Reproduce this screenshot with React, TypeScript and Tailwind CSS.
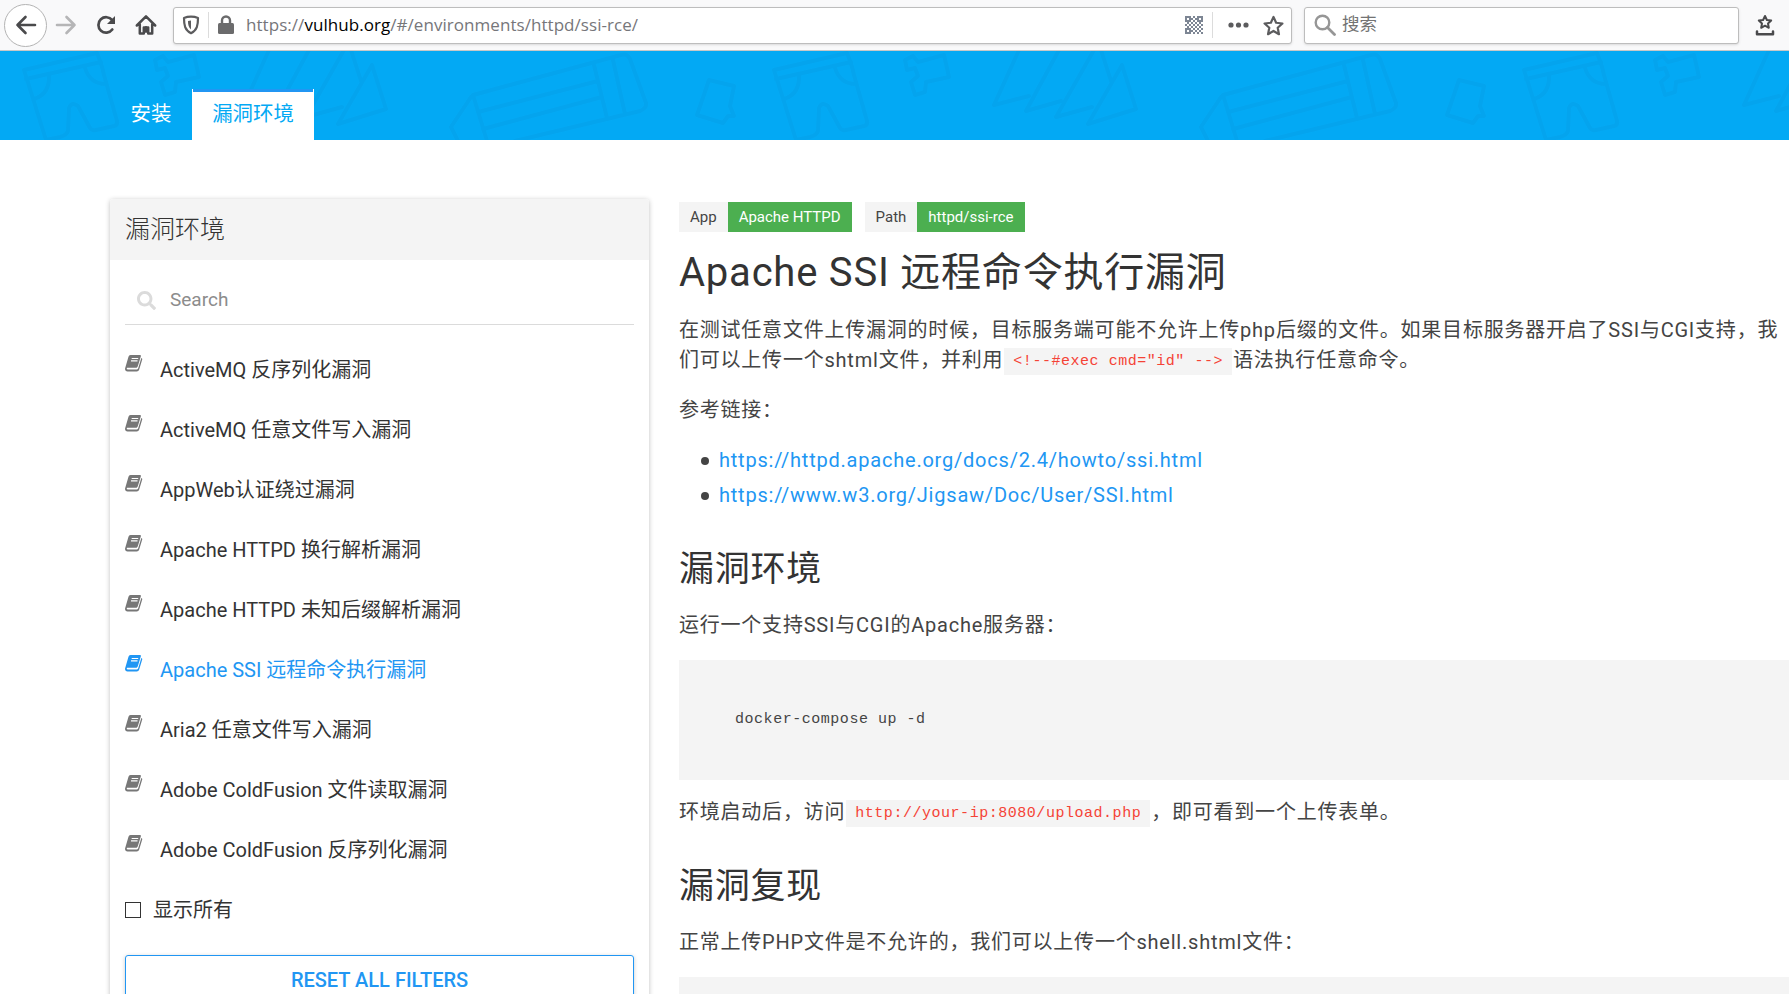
import React from 'react';
import { FaBook, FaSearch } from 'react-icons/fa';

const environments = [
  'ActiveMQ 反序列化漏洞',
  'ActiveMQ 任意文件写入漏洞',
  'AppWeb认证绕过漏洞',
  'Apache HTTPD 换行解析漏洞',
  'Apache HTTPD 未知后缀解析漏洞',
  'Apache SSI 远程命令执行漏洞',
  'Aria2 任意文件写入漏洞',
  'Adobe ColdFusion 文件读取漏洞',
  'Adobe ColdFusion 反序列化漏洞',
];

const activeEnvironment = 'Apache SSI 远程命令执行漏洞';

const links = [
  'https://httpd.apache.org/docs/2.4/howto/ssi.html',
  'https://www.w3.org/Jigsaw/Doc/User/SSI.html',
];

const STAR = 'M10 1.8l2.5 5.6 6 .7-4.5 4.1 1.2 6.1-5.2-3.1-5.2 3.1L6 12.2 1.5 8.1l6-.7z';

const QR_ROWS = [
  '111010111',
  '101101101',
  '111010111',
  '010101010',
  '101010101',
  '010101010',
  '111010101',
  '101101010',
  '111010101',
];

const BrowserToolbar: React.FC = () => (
  <div className="flex h-[51px] items-center border-b border-[#c8c8c8] bg-[#f9f9fa] text-[#4a4a4c]">
    <div className="ml-1 flex h-[43px] w-[43px] shrink-0 items-center justify-center rounded-full border border-[#b4b4b4] bg-white">
      <svg className="h-[22px] w-[22px]" viewBox="0 0 22 22" fill="none" stroke="currentColor" strokeWidth="2.6" strokeLinecap="round" strokeLinejoin="round">
        <path d="M20 11H2.5M10.5 3l-8 8 8 8" />
      </svg>
    </div>
    <svg className="ml-[8px] h-[22px] w-[22px] shrink-0 text-[#b5b5b6]" viewBox="0 0 22 22" fill="none" stroke="currentColor" strokeWidth="2.6" strokeLinecap="round" strokeLinejoin="round">
      <path d="M2 11h17.500M11.500 3l8 8-8 8" />
    </svg>
    <svg className="ml-[18px] h-[22px] w-[22px] shrink-0" viewBox="0 0 22 22" fill="none" stroke="currentColor" strokeWidth="2.700" strokeLinecap="round">
      <path d="M17.300 15.500A7.700 7.700 0 1 1 17.200 6.200" />
      <path d="M20 2v8h-8z" fill="currentColor" stroke="none" />
    </svg>
    <svg className="ml-[18px] h-[22px] w-[22px] shrink-0" viewBox="0 0 22 22" fill="none" stroke="currentColor" strokeWidth="2.500" strokeLinejoin="round" strokeLinecap="round">
      <path d="M1.800 11.500L11 2.300l9.200 9.200M4.800 10.500v9h4v-6h4.400v6h4v-9" />
      <path d="M11 13v5" strokeWidth="2" />
    </svg>

    {/* Address bar */}
    <div className="ml-[16px] flex h-[37px] w-[1119px] shrink-0 items-center rounded-[3px] border border-[#bdbdbd] bg-white shadow-sm">
      <svg className="ml-[8px] h-[20px] w-[18px]" viewBox="0 0 18 20" fill="none" stroke="#5c5c5e" strokeWidth="2.200" strokeLinejoin="round">
        <path d="M9 1.600c2.500 0 5 .5 7 1.400 0 7-.8 12-7 15.200C2.800 15 2 10 2 3c2-.9 4.500-1.400 7-1.400z" />
        <path d="M9 5.500v9C6.500 12.500 6 9.500 6 6z" fill="#5c5c5e" stroke="none" />
      </svg>
      <div className="ml-[8px] h-[26px] w-px bg-[#dcdcdc]" />
      <svg className="ml-[9px] h-[20px] w-[16px]" viewBox="0 0 16 20">
        <path d="M4 9V5.500a4 4 0 0 1 8 0V9" fill="none" stroke="#6b6b6c" strokeWidth="2.400" />
        <rect x="0" y="8" width="16" height="11" rx="1.500" fill="#6b6b6c" />
      </svg>
      <span className="ml-[12px] whitespace-nowrap font-['Open_Sans','Noto_Sans',sans-serif] text-[17px] tracking-[0.05px] text-[#76767a]">
        https://<span className="text-black">vulhub.org</span>/#/environments/httpd/ssi-rce/
      </span>
      <svg className="ml-auto h-[18px] w-[18px]" viewBox="0 0 9 9" fill="#7d8694">
        {QR_ROWS.map((row, y) =>
          row.split('').map((cell, x) =>
            cell === '1' ? <rect key={`${x}-${y}`} x={x} y={y} width="1" height="1" /> : null
          )
        )}
      </svg>
      <div className="ml-[9px] h-[26px] w-px bg-[#dcdcdc]" />
      <svg className="ml-[15px] h-[6px] w-[21px]" viewBox="0 0 21 6" fill="#5c5c5e">
        <circle cx="3" cy="3" r="2.600" />
        <circle cx="10.500" cy="3" r="2.600" />
        <circle cx="18" cy="3" r="2.600" />
      </svg>
      <svg className="ml-[14px] mr-[7px] h-[21px] w-[21px]" viewBox="0 0 20 20" fill="none" stroke="#5c5c5e" strokeWidth="2.100" strokeLinejoin="round">
        <path d={STAR} />
      </svg>
    </div>

    {/* Search bar */}
    <div className="ml-[12px] flex h-[37px] w-[435px] shrink-0 items-center rounded-[3px] border border-[#bdbdbd] bg-white shadow-sm">
      <svg className="ml-[9px] h-[22px] w-[22px]" viewBox="0 0 22 22" fill="none" stroke="#969696" strokeWidth="2.400" strokeLinecap="round">
        <circle cx="8.500" cy="8.500" r="6.800" />
        <path d="M13.500 13.500l7 7" strokeWidth="2.800" />
      </svg>
      <span className="ml-[6px] text-[17.5px] leading-none text-[#737373]">搜索</span>
    </div>
    <svg className="ml-[16px] h-[22px] w-[20px] shrink-0" viewBox="0 0 20 22" fill="none" stroke="currentColor" strokeWidth="2.200" strokeLinecap="round" strokeLinejoin="round">
      <path d="M10 2l1.900 4 4.300.5-3.200 3 .8 4.300-3.800-2.100-3.800 2.100.8-4.300-3.200-3 4.300-.5z" strokeWidth="2" />
      <path d="M2 17.500v2.800h16v-2.800" strokeWidth="2.500" />
    </svg>
  </div>
);

const Doodles: React.FC = () => (
  <svg className="absolute inset-0 h-full w-full" fill="none" stroke="#04a4ee" strokeWidth="4" strokeLinejoin="round" strokeLinecap="round">
    <defs>
      <pattern id="doodles" width="750" height="200" patternUnits="userSpaceOnUse">
        {/* shorts */}
        <path d="M24 19L97 2Q102 14 104 24L117 70Q118 74 114 75L96 79Q92 80 90 77L78 55Q72 50 69 57L68 80Q67 84 60 86L46 89Z" />
        <path d="M26 28L101 11M49 24Q50 43 34 48M85 17Q90 33 106 33" />
        {/* puzzle piece */}
        <path d="M155 9L163 5 168 11 194 4 199 26 176 31 175 41 165 44 161 31 168 25 165 17 157 19Z" />
        {/* triangles */}
        <path d="M269 -1L244 54 279 45M309 -1L276 60 311 50M344 -1L306 66 342 56M351 -1L361 30M372 14L338 73 386 58Z" />
        {/* pencil */}
        <path d="M487 90L473 44 621 4Q627 2 630 8L646 52Q647 57 640 60L515 90M594 14L607 67M613 9L625 63M478 61L598 30M483 78L602 46M471 46L451 76 458 90" />
        <path d="M709 29L734 35 730 55 734 65 728 65 723 72 697 64Z" />
      </pattern>
    </defs>
    <rect width="100%" height="100%" fill="url(#doodles)" stroke="none" />
  </svg>
);

const Sidebar: React.FC = () => (
  <aside className="h-[900px] w-[539px] shrink-0 rounded-t-[3px] bg-white shadow-[0_1px_5px_rgba(0,0,0,0.25)]">
    <div className="flex h-[61px] items-center rounded-t-[3px] bg-[#f4f4f4] px-[15px] text-[25px] font-light text-[#333]">
      漏洞环境
    </div>
    <div className="px-[15px]">
      <div className="mt-[16px] flex h-[49px] items-center border-b border-[#dbdbdb] pl-[12px]">
        <FaSearch className="h-[19px] w-[19px] text-[#dbdbdb]" />
        <span className="ml-[14px] text-[19px] text-[#8c8c8c]">Search</span>
      </div>
      <ul className="mt-[15px]">
        {environments.map((name) => (
          <li
            key={name}
            className={`flex h-[60px] items-center ${name === activeEnvironment ? 'text-[#2196f3]' : 'text-[#333]'}`}
          >
            <BookIcon active={name === activeEnvironment} />
            <span className="ml-[17px] whitespace-nowrap text-[20px]">{name}</span>
          </li>
        ))}
      </ul>
      <div className="flex h-[60px] items-center text-[20px] text-[#333]">
        <span className="h-[16px] w-[16px] border border-[#333]" />
        <span className="ml-[12px]">显示所有</span>
      </div>
      <button className="mt-[15px] h-[50px] w-full rounded-[3px] border border-[#2196f3] text-[20px] font-medium text-[#2196f3] shadow-[0_1px_4px_rgba(0,0,0,0.2)]">
        RESET ALL FILTERS
      </button>
    </div>
  </aside>
);

const BookIcon: React.FC<{ active: boolean }> = ({ active }) => (
  <svg className="mb-[13px] h-[17px] w-[18px]" viewBox="0 0 18 17" fill={active ? '#2196f3' : '#777'}>
    <path d="M5.500 0h9.300c.9 0 1.300.7 1 1.500l-3 9.800c-.3.9-.9 1.500-1.900 1.500H2.300c-.7 0-.9 1.700.4 1.700h8.600c1 0 1.600-.4 1.900-1.300L16.300 3c.9.2 1.100.8.9 1.500l-3 10c-.4 1.300-1.200 2-2.500 2H2.500C.7 16.500-.4 14.800.2 13L3.400 2C3.800.700 4.500 0 5.500 0z" />
    <path d="M6.700 3.500h6.500M6 5.900h6.500" stroke="#fff" strokeWidth="1.200" />
  </svg>
);

const Tag: React.FC<{ label: string; value: string }> = ({ label, value }) => (
  <div className="flex h-[30px] text-[15px] leading-[30px]">
    <span className="bg-[#f4f4f4] px-[11px] text-[#444]">{label}</span>
    <span className="bg-[#4caf50] px-[11px] text-white">{value}</span>
  </div>
);

const Code: React.FC<{ children: React.ReactNode }> = ({ children }) => (
  <code className="mx-[1px] inline-block h-[27px] bg-[#f4f4f4] px-[9px] align-top font-['Liberation_Mono',monospace] text-[15px] leading-[27px] tracking-[0.53px] text-[#f44336] mt-[3px]">
    {children}
  </code>
);

const Article: React.FC = () => (
  <article className="ml-[30px] w-[1130px] shrink-0 whitespace-nowrap text-[20px] leading-[30px] tracking-[0.78px] text-[#444]">
    <div className="mt-[3px] flex gap-[13px] tracking-normal">
      <Tag label="App" value="Apache HTTPD" />
      <Tag label="Path" value="httpd/ssi-rce" />
    </div>
    <h1 className="mt-[16px] text-[40px] leading-[50px] text-[#333]">Apache SSI 远程命令执行漏洞</h1>
    <p className="mt-[17px]">
      在测试任意文件上传漏洞的时候，目标服务端可能不允许上传php后缀的文件。如果目标服务器开启了SSI与CGI支持，我
      <br />
      们可以上传一个shtml文件，并利用
      <Code>{'<!--#exec cmd="id" -->'}</Code>
      语法执行任意命令。
    </p>
    <p className="mt-[20px]">参考链接：</p>
    <ul className="mt-[17px]">
      {links.map((href) => (
        <li key={href} className="flex h-[35px] items-center pl-[22px]">
          <span className="mt-[2px] h-[8px] w-[8px] rounded-full bg-[#444]" />
          <a className="ml-[10px] text-[#2196f3]">{href}</a>
        </li>
      ))}
    </ul>
    <h2 className="mt-[33px] text-[35px] leading-[50px] text-[#333]">漏洞环境</h2>
    <p className="mt-[15px]">运行一个支持SSI与CGI的Apache服务器：</p>
    <pre className="mt-[20px] flex h-[120px] items-center bg-[#f4f4f4] pl-[56px] font-['Liberation_Mono',monospace] text-[15px] tracking-[0.53px]">
      docker-compose up -d
    </pre>
    <p className="mt-[17px]">
      环境启动后，访问
      <Code>http://your-ip:8080/upload.php</Code>
      ，即可看到一个上传表单。
    </p>
    <h2 className="mt-[35px] text-[35px] leading-[50px] text-[#333]">漏洞复现</h2>
    <p className="mt-[15px]">正常上传PHP文件是不允许的，我们可以上传一个shell.shtml文件：</p>
    <pre className="mt-[20px] h-[120px] bg-[#f4f4f4]" />
  </article>
);

export default function App() {
  return (
    <div
      lang="zh-CN"
      className="h-[994px] w-[1789px] overflow-hidden bg-white font-[Roboto,'Noto_Sans_CJK_SC',sans-serif]"
    >
      <BrowserToolbar />
      <header className="relative h-[89px] bg-[#03a9f4]">
        <Doodles />
        <nav className="relative flex h-full items-end pl-[110px] text-[20.4px] text-white">
          <a className="flex h-[51px] w-[82px] items-center justify-center">安装</a>
          <a className="flex h-[51px] w-[122px] items-center justify-center border-x border-white bg-white text-[#03a9f4] shadow-[inset_0_3px_0_#2196f3]">
            漏洞环境
          </a>
        </nav>
      </header>
      <main className="flex pl-[110px] pt-[59px]">
        <Sidebar />
        <Article />
      </main>
    </div>
  );
}
